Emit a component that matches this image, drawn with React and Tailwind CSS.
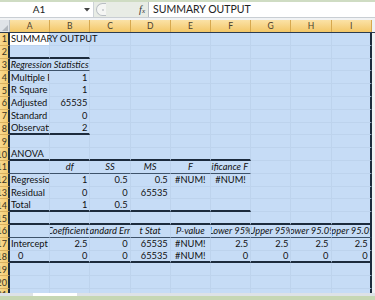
import React from 'react';

const COLS = ['A', 'B', 'C', 'D', 'E', 'F', 'G', 'H', 'I'];

const ROWS = {
  1: { cells: { A: { t: 'SUMMARY OUTPUT', a: 'l', active: true } } },
  2: { bd: { cols: 'AB', type: 'dark' } },
  3: { cells: { A: { t: 'Regression Statistics', a: 'c', i: true, span: 2 } }, bd: { cols: 'AB', type: 'thin' } },
  4: { cells: { A: { t: 'Multiple R', a: 'l' }, B: { t: '1', a: 'r' } } },
  5: { cells: { A: { t: 'R Square', a: 'l' }, B: { t: '1', a: 'r' } } },
  6: { cells: { A: { t: 'Adjusted R Square', a: 'l' }, B: { t: '65535', a: 'r' } } },
  7: { cells: { A: { t: 'Standard Error', a: 'l' }, B: { t: '0', a: 'r' } } },
  8: { cells: { A: { t: 'Observations', a: 'l' }, B: { t: '2', a: 'r' } }, bd: { cols: 'AB', type: 'dark' } },
  9: {},
  10: { cells: { A: { t: 'ANOVA', a: 'l' } }, bd: { cols: 'ABCDEF', type: 'dark' } },
  11: {
    cells: {
      B: { t: 'df', a: 'c', i: true },
      C: { t: 'SS', a: 'c', i: true },
      D: { t: 'MS', a: 'c', i: true },
      E: { t: 'F', a: 'c', i: true },
      F: { t: 'Significance F', a: 'r', i: true },
    },
    bd: { cols: 'ABCDEF', type: 'thin' },
  },
  12: {
    cells: {
      A: { t: 'Regression', a: 'l' },
      B: { t: '1', a: 'r' },
      C: { t: '0.5', a: 'r' },
      D: { t: '0.5', a: 'r' },
      E: { t: '#NUM!', a: 'c' },
      F: { t: '#NUM!', a: 'c' },
    },
  },
  13: {
    cells: {
      A: { t: 'Residual', a: 'l' },
      B: { t: '0', a: 'r' },
      C: { t: '0', a: 'r' },
      D: { t: '65535', a: 'r' },
    },
  },
  14: {
    cells: { A: { t: 'Total', a: 'l' }, B: { t: '1', a: 'r' }, C: { t: '0.5', a: 'r' } },
    bd: { cols: 'ABCDEF', type: 'dark' },
  },
  15: { bd: { cols: 'ABCDEFGHI', type: 'dark' } },
  16: {
    cells: {
      B: { t: 'Coefficients', a: 'c', i: true },
      C: { t: 'Standard Error', a: 'c', i: true },
      D: { t: 't Stat', a: 'c', i: true },
      E: { t: 'P-value', a: 'c', i: true },
      F: { t: 'Lower 95%', a: 'c', i: true },
      G: { t: 'Upper 95%', a: 'c', i: true },
      H: { t: 'Lower 95.0%', a: 'c', i: true },
      I: { t: 'Upper 95.0%', a: 'c', i: true },
    },
    bd: { cols: 'ABCDEFGHI', type: 'thin' },
  },
  17: {
    cells: {
      A: { t: 'Intercept', a: 'l' },
      B: { t: '2.5', a: 'r' },
      C: { t: '0', a: 'r' },
      D: { t: '65535', a: 'r' },
      E: { t: '#NUM!', a: 'c' },
      F: { t: '2.5', a: 'r' },
      G: { t: '2.5', a: 'r' },
      H: { t: '2.5', a: 'r' },
      I: { t: '2.5', a: 'r' },
    },
  },
  18: {
    cells: {
      A: { t: '0', a: 'l8' },
      B: { t: '0', a: 'r' },
      C: { t: '0', a: 'r' },
      D: { t: '65535', a: 'r' },
      E: { t: '#NUM!', a: 'c' },
      F: { t: '0', a: 'r' },
      G: { t: '0', a: 'r' },
      H: { t: '0', a: 'r' },
      I: { t: '0', a: 'r' },
    },
    bd: { cols: 'ABCDEFGHI', type: 'dark' },
  },
  19: {},
  20: {},
  21: {},
};

const ALIGN = {
  l: 'justify-start pl-[1px]',
  l8: 'justify-start pl-[8px]',
  r: 'justify-end pr-[2px]',
  c: 'justify-center',
};

const BOTTOM = {
  none: 'border-b border-b-[#bdd3ed]',
  dark: 'border-b-2 border-b-[#1c2b3d]',
  thin: 'border-b border-b-[#3e536b]',
};

function Row({ n }) {
  const row = ROWS[n] || {};
  const cells = row.cells || {};
  const out = [];
  for (let k = 0; k < COLS.length; k++) {
    const col = COLS[k];
    const c = cells[col];
    const span = c && c.span ? c.span : 1;
    const lastCol = COLS[k + span - 1];
    const bType = row.bd && row.bd.cols.includes(col) ? row.bd.type : 'none';
    const isLast = lastCol === 'I';
    const cls = [
      'h-full shrink-0 flex items-center whitespace-nowrap',
      span === 2 ? 'w-[80.4px]' : 'w-[40.2px]',
      isLast ? 'border-r-2 border-r-[#1c2b3d]' : 'border-r border-r-[#bdd3ed]',
      BOTTOM[bType],
      c && c.active ? 'bg-white relative z-10 overflow-visible' : 'overflow-hidden',
      c ? ALIGN[c.a] : '',
      c && c.i ? 'italic' : '',
    ].join(' ');
    out.push(
      <div key={col} className={cls}>
        {c ? <span className="leading-none">{c.t}</span> : null}
      </div>
    );
    k += span - 1;
  }
  return (
    <div className="flex h-[12.8px] shrink-0">
      <div className="w-[10px] shrink-0 h-full bg-gradient-to-r from-[#f8d98f] to-[#f4cb6d] border-r-2 border-r-[#1c2b3d] border-b border-b-[#d9b160] flex items-center justify-end overflow-hidden pr-[1px] text-[9px] text-[#3a3526] leading-none">
        {n}
      </div>
      <div className="flex h-full bg-[#c6dcf6]">{out}</div>
    </div>
  );
}

export default function App() {
  const rowNums = Array.from({ length: 21 }, (_, i) => i + 1);
  return (
    <div
      className="w-[375px] h-[300px] overflow-hidden bg-[#eef1f4] flex flex-col text-[9.3px] text-[#111]"
      style={{ fontFamily: 'Lato, "Liberation Sans", sans-serif' }}
    >
      {/* top strip */}
      <div className="h-[2px] shrink-0 bg-[#cfdcc3]" />
      {/* formula bar */}
      <div className="h-[16px] shrink-0 flex bg-[#e8ece5] border-b border-b-[#c9ced3]">
        <div className="w-[94px] shrink-0 bg-white flex items-center border-r border-r-[#cdd2d7]">
          <span className="w-[78px] text-center text-[10px] text-[#222]">A1</span>
          <svg width="6" height="4" viewBox="0 0 6 4" className="ml-[6px]">
            <path d="M0 0 L6 0 L3 3.5 Z" fill="#444" />
          </svg>
        </div>
        <div className="w-[54px] shrink-0 flex items-center">
          <div className="ml-[2px] w-[10px] h-[13px] rounded-l-full border border-r-0 border-[#b9bec3] bg-[#f5f6f4] flex items-center justify-center">
            <div className="w-[2px] h-[2px] rounded-full bg-[#c3c7cb] ml-[3px]" />
          </div>
          <span
            className="ml-auto mr-[3px] italic text-[10px] text-[#333] leading-none"
            style={{ fontFamily: '"Liberation Serif", serif' }}
          >
            f<span className="text-[7px]">x</span>
          </span>
        </div>
        <div className="flex-1 bg-white border-l border-l-[#b6bcc3] flex items-center pl-[4px] text-[10.5px] text-[#222] whitespace-nowrap">
          SUMMARY OUTPUT
        </div>
      </div>
      <div className="h-[2px] shrink-0 bg-[#f1f3f5]" />
      {/* column headers */}
      <div className="h-[12px] shrink-0 flex">
        <div className="w-[10px] shrink-0 h-full bg-[#dfe3e8] border-r border-r-[#b9bfc6] relative">
          <svg width="6" height="6" viewBox="0 0 6 6" className="absolute right-[1px] bottom-[1px]">
            <path d="M6 0 L6 6 L0 6 Z" fill="#b1b7be" />
          </svg>
        </div>
        {COLS.map((c) => (
          <div
            key={c}
            className="w-[40.2px] shrink-0 h-full bg-gradient-to-b from-[#fbe2a6] to-[#f3c766] border-r border-r-[#d6a84f] flex items-center justify-center text-[8.5px] text-[#4a4030] leading-none"
          >
            {c}
          </div>
        ))}
      </div>
      {/* grid */}
      <div className="h-[261px] shrink-0 overflow-hidden border-t border-t-[#2b3b4f] flex flex-col">
        {rowNums.map((n) => (
          <Row key={n} n={n} />
        ))}
      </div>
      {/* bottom strip */}
      <div className="h-[3px] shrink-0 bg-[#dde2e7] flex">
        <div className="ml-[33px] w-[44px] h-full bg-white" />
      </div>
      <div className="h-[4px] shrink-0 bg-[#c6d7b4]" />
    </div>
  );
}
